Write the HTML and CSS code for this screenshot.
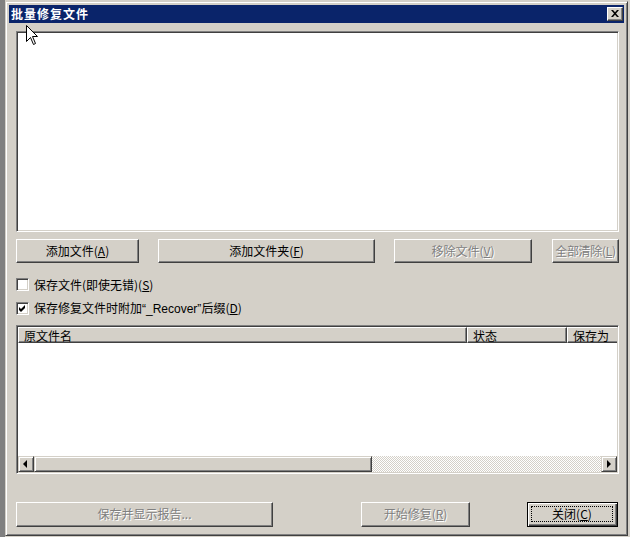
FILE: index.html
```html
<!DOCTYPE html>
<html lang="zh-CN">
<head>
<meta charset="utf-8">
<title>批量修复文件</title>
<link rel="stylesheet" href="styles.css">
</head>
<body>
<div class="window">
  <div class="titlebar">
    <span class="title">批量修复文件</span>
    <div class="tb-close">
      <svg width="8" height="7" viewBox="0 0 8 7"><path d="M0 0h2l2 2.2L6 0h2L5 3.5 8 7H6L4 4.8 2 7H0l3-3.5z" fill="#000"/></svg>
    </div>
  </div>
  <div class="content">
    <div class="filelist sunken"></div>
    <div class="btnrow">
      <div class="btn b1">添加文件(<u>A</u>)</div>
      <div class="btn b2">添加文件夹(<u>F</u>)</div>
      <div class="btn b3 disabled">移除文件(<u>V</u>)</div>
      <div class="btn b4 disabled">全部清除(<u>L</u>)</div>
    </div>
    <div class="check c-first">
      <span class="box"></span>
      <span class="label">保存文件(即使无错)(<u>S</u>)</span>
    </div>
    <div class="check c-second">
      <span class="box"><svg width="9" height="9" viewBox="0 0 9 9"><path d="M1 3L3 5L7 1V4L3 8L1 6Z" fill="#000"/></svg></span>
      <span class="label">保存修复文件时附加<span class="latin">“_Recover”</span>后缀(<u>D</u>)</span>
    </div>
    <div class="listview sunken">
      <div class="lv-header">
        <div class="col col1">原文件名</div>
        <div class="col col2">状态</div>
        <div class="col col3">保存为</div>
      </div>
      <div class="lv-rows"></div>
      <div class="hscroll">
        <div class="sb-btn"><svg width="16" height="16" viewBox="0 0 16 16"><path d="M5 8L9 4V12Z" fill="#000"/></svg></div>
        <div class="sb-thumb"></div>
        <div class="sb-track"></div>
        <div class="sb-btn"><svg width="16" height="16" viewBox="0 0 16 16"><path d="M10 8L6 4V12Z" fill="#000"/></svg></div>
      </div>
    </div>
    <div class="bottomrow">
      <div class="btn bb1 disabled">保存并显示报告...</div>
      <div class="btn bb2 disabled">开始修复(<u>R</u>)</div>
      <div class="btn bb3 default"><span class="focus">关闭(<u>C</u>)</span></div>
    </div>
  </div>
</div>
<svg class="cursor" width="13" height="21" viewBox="0 0 13 21"><path d="M0.5 0.5V16.5L4.5 12.5L7.5 19.5L9.5 18.5L6.5 11.5H11.5Z" fill="#fff" stroke="#000" stroke-width="1"/></svg>
</body>
</html>
```

FILE: styles.css
```css
html, body {
  margin: 0;
  padding: 0;
}
body {
  width: 630px;
  height: 537px;
  overflow: hidden;
  background: linear-gradient(to right, #808080 5px, #d4d0c8 5px);
  font-family: "Noto Sans CJK SC", "Liberation Sans", sans-serif;
  font-size: 12px;
  color: #000;
  position: relative;
}
u {
  text-decoration: underline;
  text-underline-offset: 1px;
}
.latin {
  font-family: "Liberation Sans", "Noto Sans CJK SC", sans-serif;
}
.window {
  margin: 1px 0 0 5px;
  width: 623px;
  height: 535px;
  box-sizing: border-box;
  border: 1px solid;
  border-color: #d4d0c8 #404040 #404040 #d4d0c8;
  box-shadow: inset 1px 1px #fff, inset -1px -1px #808080;
  padding: 3px;
  background: #d4d0c8;
  display: flex;
  flex-direction: column;
}
.titlebar {
  height: 18px;
  background: #0a246a;
  display: flex;
  align-items: center;
  padding: 0 1px 0 2px;
  flex: none;
}
.title {
  color: #fff;
  font-weight: bold;
  font-size: 12px;
  line-height: 18px;
  letter-spacing: 1px;
}
.tb-close {
  margin-left: auto;
  width: 16px;
  height: 14px;
  box-sizing: border-box;
  background: #d4d0c8;
  border: 1px solid;
  border-color: #fff #404040 #404040 #fff;
  box-shadow: inset -1px -1px #808080;
  display: flex;
  align-items: center;
  justify-content: center;
  padding: 0 1px 1px 0;
}
.tb-close svg { display: block; }
.content {
  flex: 1;
  display: flex;
  flex-direction: column;
  padding: 8px 5px 0 7px;
}
.sunken {
  box-sizing: border-box;
  border: 1px solid;
  border-color: #808080 #fff #fff #808080;
  box-shadow: inset 1px 1px #404040, inset -1px -1px #d4d0c8;
  background: #fff;
}
.filelist {
  width: 603px;
  height: 201px;
  flex: none;
}
.btnrow {
  margin-top: 7px;
  height: 24px;
  display: flex;
  flex: none;
}
.btn {
  box-sizing: border-box;
  background: #d4d0c8;
  border: 1px solid;
  border-color: #fff #404040 #404040 #fff;
  box-shadow: inset -1px -1px #808080;
  display: flex;
  align-items: center;
  justify-content: center;
  white-space: nowrap;
  overflow: hidden;
  line-height: 14px;
  padding-bottom: 1px;
}
.btn.disabled {
  color: #808080;
  text-shadow: 1px 1px 0 #fff;
}
.b1 { width: 123px; }
.b2 { width: 217px; margin-left: 19px; }
.b3 { width: 138px; margin-left: 19px; }
.b4 { width: 67px; margin-left: 20px; letter-spacing: -0.3px; }
.check {
  display: flex;
  align-items: center;
  height: 13px;
  flex: none;
}
.c-first { margin-top: 15px; }
.c-second { margin-top: 11px; }
.box {
  width: 13px;
  height: 13px;
  box-sizing: border-box;
  border: 1px solid;
  border-color: #808080 #fff #fff #808080;
  box-shadow: inset 1px 1px #404040, inset -1px -1px #d4d0c8;
  background: #fff;
  padding: 1px;
  display: flex;
  flex: none;
}
.box svg { display: block; }
.label {
  margin-left: 5px;
  line-height: 14px;
  white-space: nowrap;
}
.listview {
  margin-top: 10px;
  width: 603px;
  height: 149px;
  padding: 1px;
  display: flex;
  flex-direction: column;
  overflow: hidden;
  flex: none;
}
.lv-header {
  display: flex;
  height: 16px;
  flex: none;
  overflow: hidden;
}
.col {
  box-sizing: border-box;
  height: 16px;
  background: #d4d0c8;
  border: 1px solid;
  border-color: #fff #404040 #404040 #fff;
  box-shadow: inset -1px -1px #808080;
  padding-left: 5px;
  padding-top: 1px;
  line-height: 13px;
  white-space: nowrap;
  overflow: hidden;
  flex: none;
}
.col1 { width: 449px; }
.col2 { width: 100px; }
.col3 { width: 100px; }
.lv-rows {
  flex: 1;
  background: #fff;
}
.hscroll {
  height: 16px;
  display: flex;
  flex: none;
}
.sb-btn {
  width: 16px;
  height: 16px;
  box-sizing: border-box;
  background: #d4d0c8;
  border: 1px solid;
  border-color: #d4d0c8 #404040 #404040 #d4d0c8;
  box-shadow: inset 1px 1px #fff, inset -1px -1px #808080;
  flex: none;
  position: relative;
}
.sb-btn svg {
  position: absolute;
  left: -1px;
  top: -1px;
}
.sb-thumb {
  width: 338px;
  box-sizing: border-box;
  background: #d4d0c8;
  border: 1px solid;
  border-color: #d4d0c8 #404040 #404040 #d4d0c8;
  box-shadow: inset 1px 1px #fff, inset -1px -1px #808080;
  flex: none;
}
.sb-track {
  flex: 1;
  background: repeating-conic-gradient(#fff 0 25%, #d4d0c8 0 50%) 0 0 / 2px 2px;
}
.bottomrow {
  margin-top: 28px;
  height: 25px;
  display: flex;
  flex: none;
}
.bb1 { width: 257px; }
.bb2 { width: 109px; margin-left: 88px; }
.bb3 { width: 91px; margin-left: 57px; }
.btn.default {
  border: 1px solid #000;
  box-shadow: inset 1px 1px #fff, inset -1px -1px #404040, inset -2px -2px #808080;
  padding: 3px 4px 4px 3px;
}
.focus {
  flex: 1;
  align-self: stretch;
  border: 1px dotted #000;
  display: flex;
  align-items: center;
  justify-content: center;
}
.cursor {
  position: absolute;
  left: 26px;
  top: 25px;
}
```
